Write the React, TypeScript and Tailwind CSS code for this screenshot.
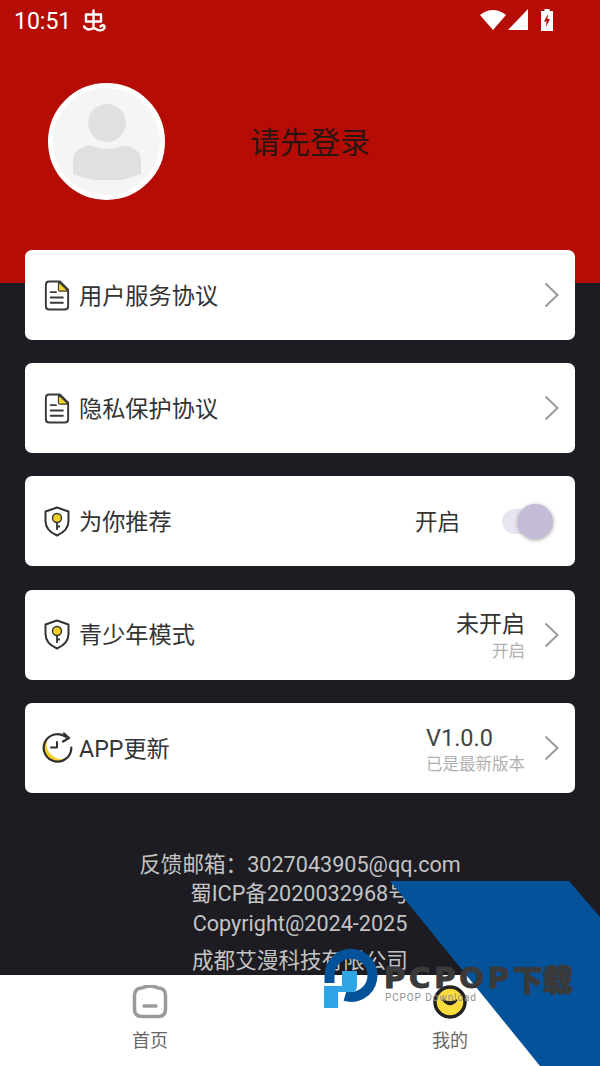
import type { ReactNode } from 'react'

const fontStack = "font-['Roboto','Noto_Sans_CJK_SC',sans-serif]"

function DocIcon() {
  return (
    <svg width="26" height="31" viewBox="0 0 26 32" className="shrink-0">
      <path d="M16 1.5 H5 Q1.5 1.5 1.5 5 V27 Q1.5 30.5 5 30.5 H21 Q24.5 30.5 24.5 27 V10 L16 1.5z" fill="none" stroke="#3a3a3a" strokeWidth="2" strokeLinejoin="round" />
      <path d="M14.5 2 V10 Q14.5 11.5 16 11.5 H24.5 z" fill="#f5d327" stroke="#3a3a3a" strokeWidth="1.2" strokeLinejoin="round" />
      <path d="M6.5 12.5 H12 M6.5 18 H19 M6.5 23.5 H19" stroke="#3a3a3a" strokeWidth="2" strokeLinecap="round" />
    </svg>
  )
}

function ShieldIcon() {
  return (
    <svg width="26" height="31" viewBox="0 0 26 31" className="shrink-0">
      <path d="M13 1.5 L24.5 5.5 V15 Q24.5 24.5 13 29.5 Q1.5 24.5 1.5 15 V5.5z" fill="none" stroke="#333" strokeWidth="2" strokeLinejoin="round" />
      <circle cx="13" cy="12" r="4.5" fill="#f5cf25" stroke="#333" strokeWidth="1.4" />
      <path d="M13 16.5 V24 M13 20.5 H16" stroke="#333" strokeWidth="1.8" />
    </svg>
  )
}

function UpdateIcon() {
  return (
    <svg width="31" height="31" viewBox="0 0 31 31" className="-ml-[2px] shrink-0">
      <path d="M6 6 A13.5 13.5 0 0 0 25 26 A15 15 0 0 1 6 6z" fill="#f5cf25" />
      <path d="M24 5 A13.8 13.8 0 1 0 29.3 15.5" fill="none" stroke="#2f2f2f" strokeWidth="2.2" strokeLinecap="round" />
      <path d="M22 1.5 L27 6 L21 9.5" fill="none" stroke="#2f2f2f" strokeWidth="2.2" strokeLinecap="round" strokeLinejoin="round" />
      <path d="M15 10 V15.5 H9" fill="none" stroke="#2f2f2f" strokeWidth="2" strokeLinecap="round" strokeLinejoin="round" />
    </svg>
  )
}

function Chevron() {
  return (
    <svg width="16" height="26" viewBox="0 0 16 26" className="shrink-0">
      <path d="M1.5 1.5 L13.5 13 L1.5 24.5" fill="none" stroke="#9a9a9a" strokeWidth="2" />
    </svg>
  )
}

function MenuRow({ icon, label, children }: { icon: ReactNode; label: string; children?: ReactNode }) {
  return (
    <div className="flex h-[90px] items-center rounded-[7px] bg-white pl-[19px] pr-[15px]">
      <div className="flex w-[35px] shrink-0 items-center">{icon}</div>
      <span className="pt-[3px] text-[23.2px] leading-none text-[#333333]">{label}</span>
      <div className="ml-auto flex items-center">{children}</div>
    </div>
  )
}

function StatusBar() {
  return (
    <div className="flex h-[42px] items-center pl-[14px] pr-[47px] text-white">
      <span className="text-[23px] leading-none">10:51</span>
      <svg width="24" height="24" viewBox="0 0 24 24" className="ml-[12px]" fill="none" stroke="#fff" strokeWidth="2.4" strokeLinecap="round" strokeLinejoin="round">
        <path d="M3 5.5 H18 V12.5 H3z" />
        <path d="M10.5 1.5 V17" />
        <path d="M1 17.5 Q4 21.5 8 20 Q11 18.5 13 20 Q17 22.5 20 20.5 Q22.5 18.5 21 16.5 Q19 15.5 17.5 17.5" />
      </svg>
      <div className="mb-[3px] ml-auto flex items-center">
        <svg width="26" height="21" viewBox="0 0 26 21"><path d="M0 6 Q13 -4 26 6 L13 21z" fill="#fff" /></svg>
        <svg width="20" height="21" viewBox="0 0 20 21" className="ml-[2px]"><path d="M0 21 L20 0 V21z" fill="#fff" /></svg>
        <svg width="12" height="22" viewBox="0 0 12 22" className="ml-[13px]">
          <path d="M3.5 0 H8.5 V2 H12 V22 H0 V2 H3.5z" fill="#fff" />
          <path d="M7 5 L3 12.5 H5.5 L5 18 L9 10 H6.5z" fill="#b50d05" />
        </svg>
      </div>
    </div>
  )
}

function Watermark() {
  return (
    <div className="pointer-events-none absolute inset-0">
      <svg width="600" height="1066" viewBox="0 0 600 1066" className="absolute left-0 top-0">
        <path d="M390 881 H569 L600 917 V1066 H540z" fill="#03529a" />
        <path d="M329.5 983 V975 A21.5 21.5 0 1 1 345 996" fill="none" stroke="#03529a" strokeWidth="10" />
        <path d="M342 971 H357 V986 Q357 992 351 992 H338 V1008 H324 V986 H342z" fill="#2fa5e8" />
      </svg>
      <div className="absolute left-[384px] top-[962px] flex items-center text-[#3a3a3a] [-webkit-text-stroke:1px_#3a3a3a]">
        <span className="font-['DejaVu_Sans',sans-serif] text-[29px] font-bold leading-[32px] tracking-[3.8px]">PCPOP</span>
        <span className="font-['Noto_Sans_CJK_SC',sans-serif] text-[30px] font-black leading-[32px]">下载</span>
      </div>
      <div className="absolute left-[385px] top-[992px] text-[10px] leading-[12px] tracking-[0.9px] text-[#909090]">PCPOP Download</div>
    </div>
  )
}

export default function App() {
  return (
    <div className={`relative flex h-[1066px] w-[600px] flex-col overflow-hidden bg-[#1c1c22] ${fontStack}`}>
      <div className="h-[283px] shrink-0 bg-[#b50d05]">
        <StatusBar />
        <div className="mt-[41px] flex items-center pl-[48px]">
          <div className="flex h-[117px] w-[117px] items-center justify-center rounded-full border-[5px] border-white bg-[#f5f5f5]">
            <svg width="68" height="76" viewBox="0 0 68 76">
              <ellipse cx="34" cy="19" rx="19" ry="19" fill="#e0e0e0" />
              <path d="M0 70 V56 Q0 46 14 42 Q18 41 22 43 Q34 47 46 43 Q50 41 54 42 Q68 46 68 56 V70 Q34 84 0 70z" fill="#e0e0e0" />
            </svg>
          </div>
          <span className="ml-[85px] pt-[3px] text-[30px] leading-none text-[#2a1512]">请先登录</span>
        </div>
      </div>

      <div className="-mt-[33px] flex flex-col gap-[23.2px] px-[25px]">
        <MenuRow icon={<DocIcon />} label="用户服务协议"><Chevron /></MenuRow>
        <MenuRow icon={<DocIcon />} label="隐私保护协议"><Chevron /></MenuRow>
        <MenuRow icon={<ShieldIcon />} label="为你推荐">
          <span className="pt-[2px] text-[22.5px] leading-none text-[#333333]">开启</span>
          <div className="relative ml-[42px] mr-[14px] h-[25px] w-[44px] rounded-full bg-[#e9e5f0]">
            <div className="absolute -right-[7px] -top-[5px] h-[35px] w-[35px] rounded-full bg-[#c5bcd8] shadow-[0_1px_4px_rgba(0,0,0,0.35)]" />
          </div>
        </MenuRow>
        <MenuRow icon={<ShieldIcon />} label="青少年模式">
          <div className="mr-[19px] flex flex-col items-end pt-[3px]">
            <span className="text-[23px] leading-[28px] text-[#333333]">未开启</span>
            <span className="mt-[3px] text-[16.5px] leading-[20px] text-[#b0b0b0]">开启</span>
          </div>
          <Chevron />
        </MenuRow>
        <MenuRow icon={<UpdateIcon />} label="APP更新">
          <div className="mr-[19px] flex flex-col items-start pt-[3px]">
            <span className="text-[23.5px] leading-[28px] text-[#444444]">V1.0.0</span>
            <span className="mt-[3px] text-[16.5px] leading-[20px] text-[#b0b0b0]">已是最新版本</span>
          </div>
          <Chevron />
        </MenuRow>
      </div>

      <div className="mt-[57px] flex flex-col items-center text-[21.6px] text-[#c4c4c4]">
        <p className="leading-[29.5px]">反馈邮箱：3027043905@qq.com</p>
        <p className="leading-[29.5px]">蜀ICP备2020032968号</p>
        <p className="leading-[29.5px]">Copyright@2024-2025</p>
        <p className="mt-[8px] leading-[29.5px]">成都艾漫科技有限公司</p>
      </div>

      <div className="absolute bottom-0 left-0 right-0 flex h-[91px] bg-white">
        <div className="flex flex-1 flex-col items-center pt-[10px]">
          <svg width="36" height="34" viewBox="0 0 36 34">
            <path d="M10 3 Q18 -1 26 3 Q33 3 33.5 10 V24 Q33.5 31.5 26 31.5 H10 Q2.5 31.5 2.5 24 V10 Q3 3 10 3z" fill="#fff" stroke="#9a9a9a" strokeWidth="3.5" />
            <path d="M12 21 H24" stroke="#9a9a9a" strokeWidth="3.5" strokeLinecap="round" />
          </svg>
          <span className="mt-[10px] text-[18px] leading-[24px] text-[#666666]">首页</span>
        </div>
        <div className="flex flex-1 flex-col items-center pt-[10px]">
          <svg width="34" height="34" viewBox="0 0 34 34">
            <circle cx="17" cy="17" r="15" fill="#fbdc3c" stroke="#222" strokeWidth="3.5" />
            <path d="M10 15 Q17 24 24 15 Q17 19 10 15z" fill="#222" stroke="#222" strokeWidth="1.5" />
          </svg>
          <span className="mt-[10px] text-[18px] leading-[24px] text-[#666666]">我的</span>
        </div>
      </div>

      <Watermark />
    </div>
  )
}
